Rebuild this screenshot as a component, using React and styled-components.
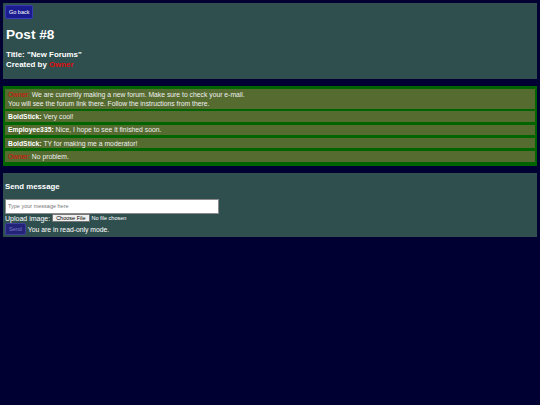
import React from 'react';
import styled, { createGlobalStyle } from 'styled-components';

const GlobalStyle = createGlobalStyle`
    body {
        margin: 0;
        background: #000033;
        font-family: "Liberation Sans", Arial, sans-serif;
        color: #ffffff;
    }
`;

const Page = styled.div`
    padding: 3px;
    display: flex;
    flex-direction: column;
    gap: 7px;
`;

const Panel = styled.section`
    background-color: #2f4f4f;
    padding: ${props => props.pad || "2px"};
`;

const BlueButton = styled.button`
    display: block;
    flex: none;
    padding: 0 3px;
    height: ${props => props.h || "14px"};
    border-radius: 2px;
    border: 1px solid ${props => (props.disabled ? "#3f3f9c" : "#3a3ab8")};
    background-color: ${props => (props.disabled ? "#23237a" : "#1b1b90")};
    color: ${props => (props.disabled ? "#7c7cc4" : "#ffffff")};
    font-family: "Liberation Sans", Arial, sans-serif;
    font-size: 5.5px;
    cursor: pointer;
`;

const PostTitle = styled.h1`
    margin: 7px 0 5.5px 1px;
    font-size: 13.6px;
    line-height: 18px;
    font-weight: bold;
`;

const Meta = styled.div`
    margin: 0 0 7.5px 1px;
    font-size: 7.9px;
    font-weight: bold;
    line-height: 10px;
`;

const OwnerName = styled.span`
    color: #dd0c0c;
    font-weight: ${props => (props.bold ? "bold" : "normal")};
`;

const MessageList = styled.div`
    background-color: #006400;
    padding: 3px 2px 4px;
    display: flex;
    flex-direction: column;
    gap: 2.75px;
`;

const Message = styled.div`
    background-color: #556b2f;
    padding: 0.75px 3px;
    font-size: 6.8px;
    line-height: 9px;
    color: #f0f0f0;
`;

const Author = styled.b`
    color: #ffffff;
`;

const SectionTitle = styled.h3`
    margin: 9px 0 7px;
    font-size: 7.8px;
    line-height: 10px;
    font-weight: bold;
`;

const MessageInput = styled.input`
    display: block;
    box-sizing: border-box;
    width: 214px;
    height: 15px;
    margin: 0;
    padding: 0 2px;
    border: 1px solid #8a8a8a;
    background: #ffffff;
    font-family: "Liberation Sans", Arial, sans-serif;
    font-size: 5.5px;
    &::placeholder {
        color: #777777;
    }
`;

const Row = styled.div`
    display: flex;
    align-items: center;
    gap: 2px;
    font-size: ${props => props.size || "7px"};
    height: ${props => props.h || "9px"};
`;

const FileInput = styled.input`
    font-family: "Liberation Sans", Arial, sans-serif;
    font-size: 5.5px;
    color: #ffffff;
    &::file-selector-button {
        font-family: "Liberation Sans", Arial, sans-serif;
        font-size: 5.5px;
        height: 8px;
        padding: 0 3px;
        margin-right: 2px;
        border: 1px solid #767676;
        border-radius: 1px;
        background: #efefef;
        color: #000000;
    }
`;

const messages = [
    { author: "Owner", owner: true, text: "We are currently making a new forum. Make sure to check your e-mail.", more: "You will see the forum link there. Follow the instructions from there." },
    { author: "BoldStick", text: "Very cool!" },
    { author: "Employee335", text: "Nice, I hope to see it finished soon." },
    { author: "BoldStick", text: "TY for making me a moderator!" },
    { author: "Owner", owner: true, text: "No problem." },
];

const App = () => {
    return (
        <>
            <GlobalStyle />
            <Page>
                <Panel>
                    <BlueButton>Go back</BlueButton>
                    <PostTitle>Post #8</PostTitle>
                    <Meta>
                        Title: "New Forums"<br />
                        Created by <OwnerName bold>Owner</OwnerName>
                    </Meta>
                </Panel>

                <MessageList>
                    {messages.map((m, i) => (
                        <Message key={i}>
                            {m.owner ? <OwnerName>{m.author}:</OwnerName> : <Author>{m.author}:</Author>} {m.text}
                            {m.more && (<><br />{m.more}</>)}
                        </Message>
                    ))}
                </MessageList>

                <Panel pad="0 2px 1px">
                    <SectionTitle>Send message</SectionTitle>
                    <MessageInput placeholder="Type your message here" />
                    <Row>
                        Upload image:<FileInput type="file" />
                    </Row>
                    <Row h="13px" size="6.8px">
                        <BlueButton h="12px" disabled>Send</BlueButton>
                        You are in read-only mode.
                    </Row>
                </Panel>
            </Page>
        </>
    );
};

export default App;
